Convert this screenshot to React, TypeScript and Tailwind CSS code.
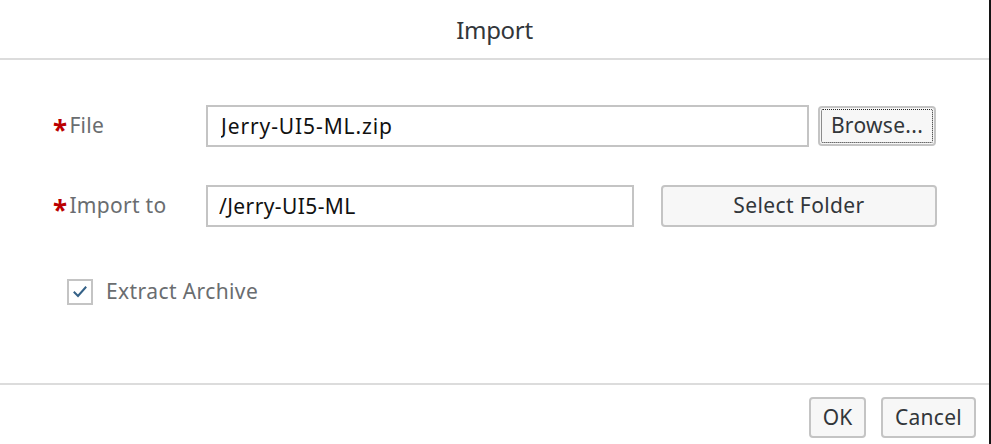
import React, { useState } from 'react';

const font = { fontFamily: '"Noto Sans", "Open Sans", Arial, sans-serif' };

const App: React.FC = () => {
  const [extract, setExtract] = useState(true);
  const [file, setFile] = useState('Jerry-UI5-ML.zip');
  const [folder, setFolder] = useState('/Jerry-UI5-ML');

  return (
    <div className="w-[991px] h-[444px] bg-white flex flex-col border-r-2 border-[#141414] text-[#32363a]" style={font}>
      <div className="h-[60px] shrink-0 flex items-center justify-center border-b-2 border-[#dcdcdc]">
        <h1 className="text-[24px] tracking-[-0.3px] text-[#32363a] pt-[1px]">Import</h1>
      </div>

      <div className="flex-1 pt-[45px]">
        <div className="flex items-center h-[42px]">
          <label className="w-[206px] pl-[53px] flex items-center text-[21px] tracking-[0.3px] text-[#6a6d70]">
            <span className="text-[#bb0000] text-[26px] font-bold leading-none mt-[7px] mr-[2px]">*</span>File
          </label>
          <input value={file} onChange={e=>setFile(e.target.value)} className="w-[603px] h-[42px] border-2 border-[#c4c4c4] px-[13px] text-[21px] tracking-[0.9px] text-[#111] outline-none"/>
          <button className="ml-[9px] w-[118px] h-[40px] rounded-[4px] border-2 border-[#c4c4c4] bg-[#f7f7f7] text-[21px] tracking-[0.3px] text-[#32363a] flex items-center justify-center">
            <span className="w-[112px] h-[34px] border border-dotted border-[#222] rounded-[2px] flex items-center justify-center">Browse...</span>
          </button>
        </div>

        <div className="flex items-center h-[42px] mt-[38px]">
          <label className="w-[206px] pl-[53px] flex items-center text-[21px] tracking-[0.3px] text-[#6a6d70]">
            <span className="text-[#bb0000] text-[26px] font-bold leading-none mt-[7px] mr-[2px]">*</span>Import to
          </label>
          <input value={folder} onChange={e=>setFolder(e.target.value)} className="w-[428px] h-[42px] border-2 border-[#c4c4c4] px-[11px] text-[21px] tracking-[0.4px] text-[#111] outline-none"/>
          <button className="ml-[27px] w-[276px] h-[42px] rounded-[4px] border-2 border-[#c4c4c4] bg-[#f7f7f7] text-[21px] tracking-[0.4px] text-[#32363a]">Select Folder</button>
        </div>

        <div className="flex items-center mt-[49px] pl-[67px]">
          <button onClick={()=>setExtract(!extract)} className="w-[26px] h-[26px] border-2 border-[#c4c4c4] bg-white flex items-center justify-center">
            {extract && (
              <svg width="16" height="14" viewBox="0 0 16 14" fill="none">
                <path d="M2.5 7.5 L6 11 L13.5 2.5" stroke="#346187" strokeWidth="2" strokeLinecap="square"/>
              </svg>
            )}
          </button>
          <span className="ml-[13px] text-[21px] tracking-[0.4px] text-[#6a6d70]">Extract Archive</span>
        </div>
      </div>

      <div className="h-[61px] shrink-0 border-t-2 border-[#dcdcdc] flex justify-end items-start pt-[12px] pr-[13px] gap-[15px]">
        <button className="w-[57px] h-[41px] rounded-[4px] border-2 border-[#c4c4c4] bg-[#f7f7f7] text-[21px] text-[#32363a]">OK</button>
        <button className="w-[95px] h-[41px] rounded-[4px] border-2 border-[#c4c4c4] bg-[#f7f7f7] text-[21px] tracking-[0.3px] text-[#32363a]">Cancel</button>
      </div>
    </div>
  );
};

export default App;
